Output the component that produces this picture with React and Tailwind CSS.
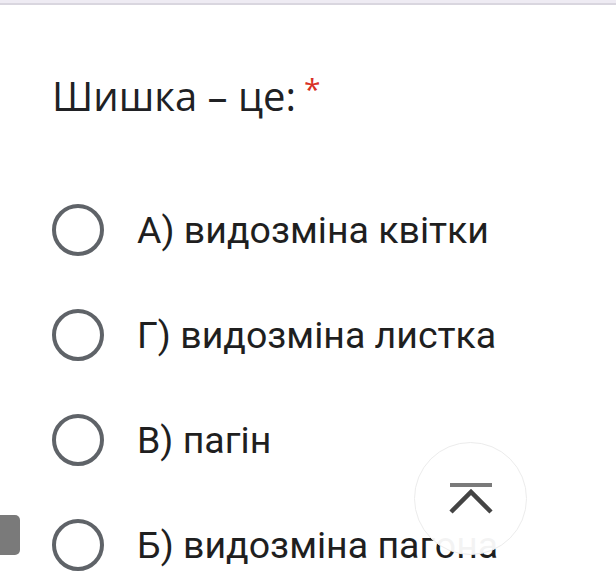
export default function App() {
  const options = [
    "А) видозміна квітки",
    "Г) видозміна листка",
    "В) пагін",
    "Б) видозміна пагона",
  ];
  return (
    <div className="relative w-[616px] h-[584px] overflow-hidden bg-white">
      <div className="h-[3px] bg-[#eeebf3]" />
      <div className="h-[2px] bg-[#d9d6df]" />
      <div className="pl-[52px] pt-[67px]">
        <div
          className="flex items-start text-[40px] leading-[48px] text-[#202124]"
          style={{ fontFamily: '"Open Sans", sans-serif' }}
        >
          <span>Шишка – це:</span>
          <span className="ml-[8px] mt-[2px] text-[30px] leading-[30px] text-[#d93025]">*</span>
        </div>
        <div className="mt-[84px] flex flex-col gap-[53px]">
          {options.map((o) => (
            <div key={o} className="flex items-center h-[52px]">
              <div className="w-[52px] h-[52px] rounded-full border-[4.5px] border-[#5f6368] shrink-0" />
              <span
                className="ml-[33px] text-[37.5px] text-[#1f1f1f] whitespace-nowrap"
                style={{ fontFamily: 'Roboto, sans-serif' }}
              >
                {o}
              </span>
            </div>
          ))}
        </div>
      </div>
      <div className="absolute left-0 top-[515px] w-[20px] h-[40px] rounded-r-[5px] bg-[#7a7a7a]" />
      <div className="absolute left-[414px] top-[442px] w-[113px] h-[113px] rounded-full bg-white/95 border border-[#ececec] flex items-center justify-center">
        <svg width="48" height="34" viewBox="0 0 48 34">
          <line x1="3" y1="3" x2="45" y2="3" stroke="#7a7a7a" strokeWidth="4" />
          <polyline points="4,30 24,10 44,30" fill="none" stroke="#444" strokeWidth="4.5" />
        </svg>
      </div>
    </div>
  );
}
